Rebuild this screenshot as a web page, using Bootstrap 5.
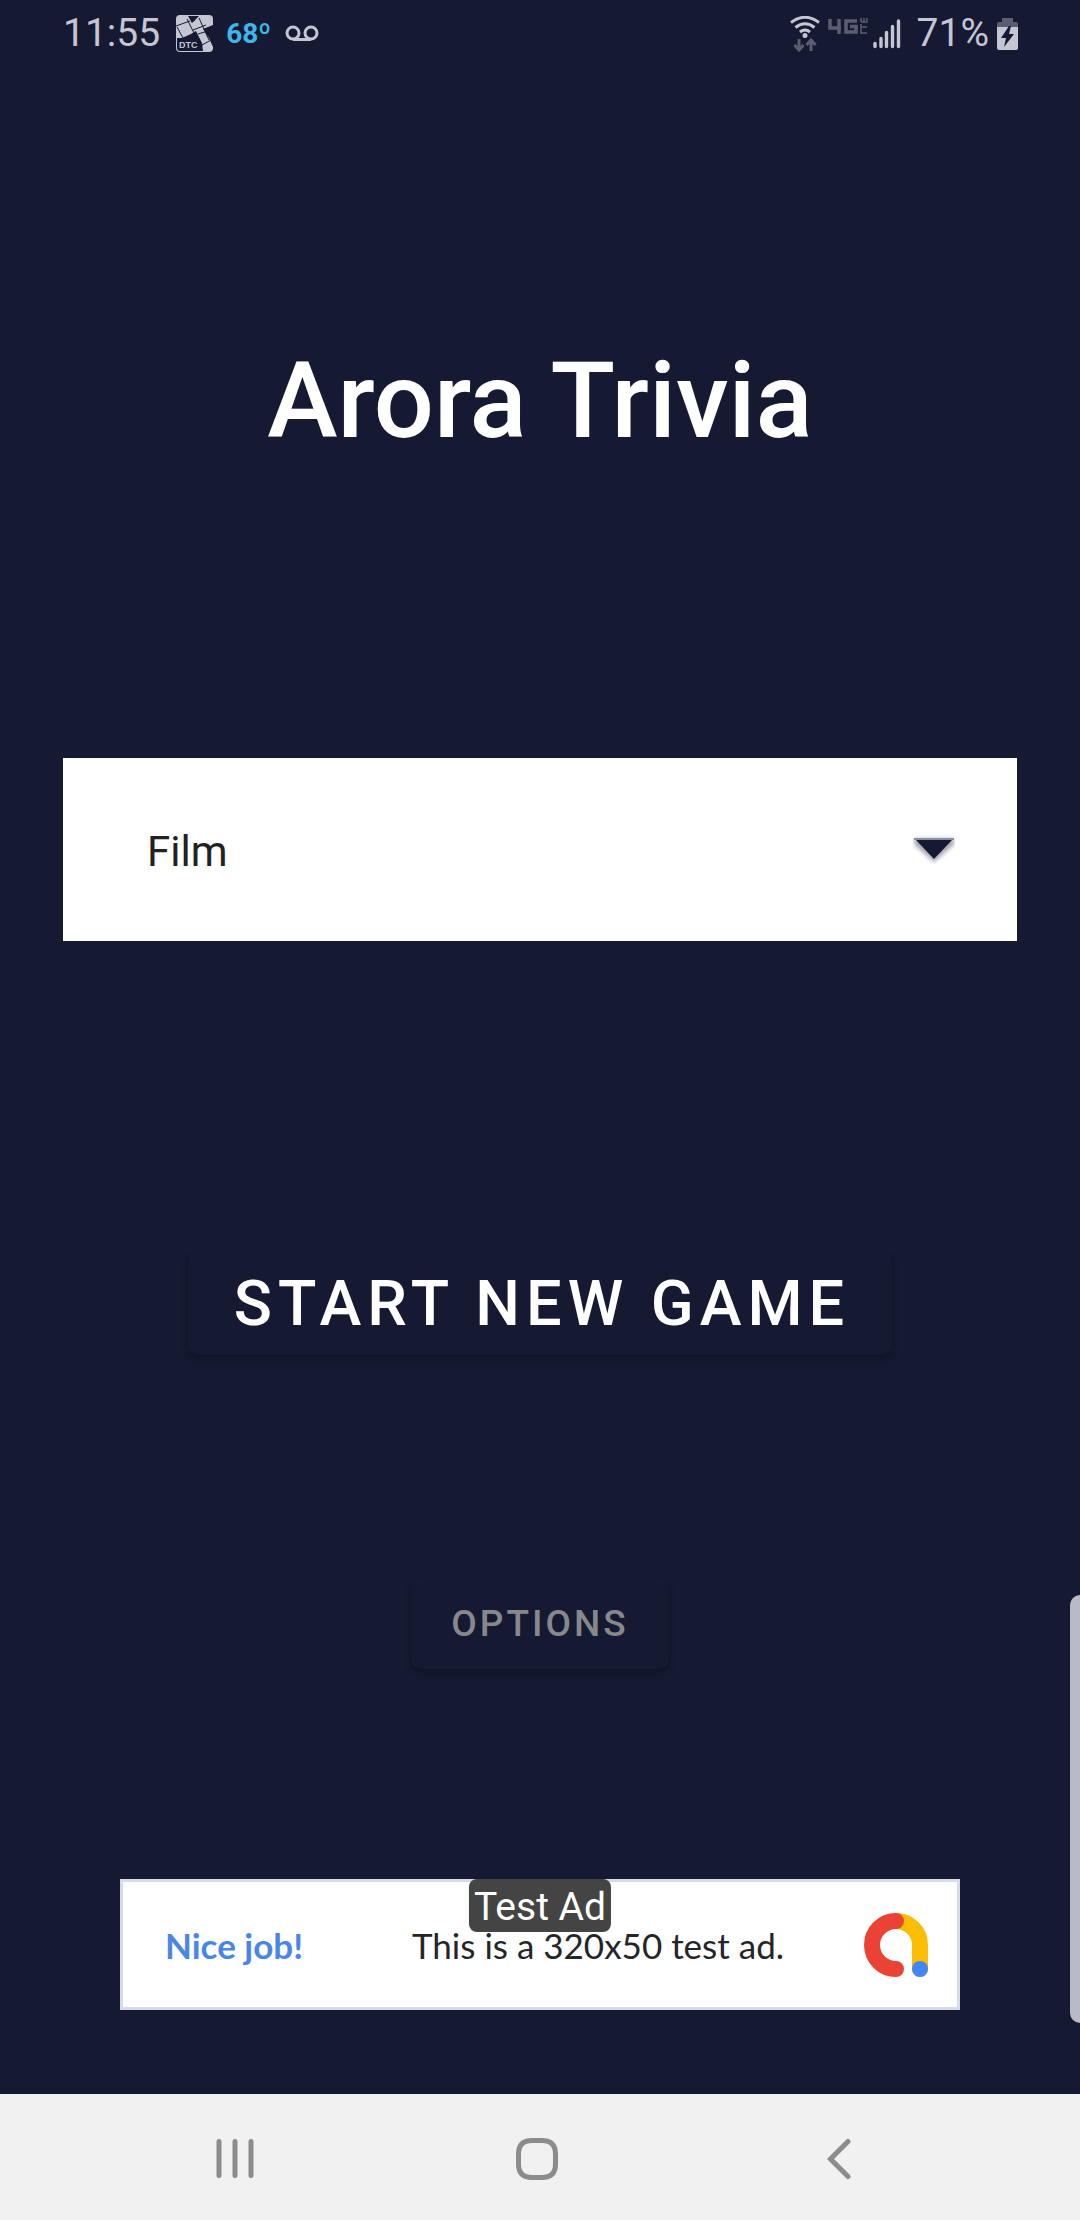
<!DOCTYPE html>
<html lang="en">
<head>
<meta charset="utf-8">
<meta name="viewport" content="width=device-width, initial-scale=1">
<title>Arora Trivia</title>
<link href="https://cdn.jsdelivr.net/npm/bootstrap@5.3.0/dist/css/bootstrap.min.css" rel="stylesheet">
<style>
  body { background: #151932; color: #fff; font-family: Roboto, "Liberation Sans", sans-serif; overflow-x: hidden; }
  svg { display: block; flex: none; }
  .status-bar { height: 64px; padding: 3px 62px 0 63px; color: #c4c6d2; font-size: 39px; line-height: 61px; }
  .status-temp { font-family: Roboto, sans-serif; font-weight: 700; font-size: 28px; color: #3fb5ea; margin-left: 13px; margin-right: 14px; }
  .game-title { font-size: 106px; line-height: 123px; font-weight: 500; margin: 276px 0 295px; }
  .category-wrap { padding: 0 63px; }
  .category-select { height: 183px; border: 0; border-radius: 0; padding: 4px 120px 0 84px; font-size: 42px; color: #222; background-color: #fff; background-image: none; }
  .category-arrow { right: 62px; top: 76px; pointer-events: none; }
  .flat-btn { background: #151932; border: 0; border-radius: 10px; font-weight: 500; box-shadow: 0 4px 6px rgba(10, 12, 26, .35); }
  .flat-btn:hover { background: #1b2040; }
  .btn-start, .btn-start:hover { color: #fff; }
  .btn-start { font-size: 63px; line-height: 103px; letter-spacing: 6px; margin-top: 311px; padding: 0 42px 0 46px; }
  .btn-options, .btn-options:hover { color: #86888c; }
  .btn-options { font-size: 37px; line-height: 91px; letter-spacing: 3px; margin-top: 223px; padding: 0 40px; }
  .ad-banner { width: 840px; max-width: 100%; height: 131px; margin: 210px 0 84px; padding: 1px 29px 0 42px; background: #fff; border: 3px solid #d6dce9; color: #242528; font-family: Lato, sans-serif; font-size: 35px; text-decoration: none; }
  .ad-head { color: #4a86e8; font-weight: 700; }
  .ad-body { gap: 80px; }
  .ad-tag { top: -3px; left: 50%; transform: translateX(-50%); background: #444; border-radius: 8px; color: #fff; font-family: Roboto, sans-serif; font-size: 39px; line-height: 49px; padding: 4px 5px 0; white-space: nowrap; }
  .edge-handle { right: 0; top: 1595px; width: 10px; height: 428px; border-radius: 14px 0 0 14px; background: #b8bac8; border: 0; padding: 0; }
  .system-nav { height: 126px; background: #f1f1f1; padding: 4px 90px 0 84px; }
  .system-nav button { background: none; border: 0; padding: 0; }
</style>
<script src="https://cdn.jsdelivr.net/npm/bootstrap@5.3.0/dist/js/bootstrap.bundle.min.js"></script>
</head>
<body class="position-relative d-flex flex-column min-vh-100">

<header class="status-bar d-flex justify-content-between">
  <div class="d-flex align-items-center">
    <span>11:55</span>
    <svg class="ms-3" width="37" height="37" viewBox="0 0 37 37" role="img" aria-label="DTC">
      <rect width="37" height="37" rx="4" fill="#c4c6d2"/>
      <path d="M12 1H23L16 8ZM1 23L6 23L15 19L20 16L26 28L27 36H4Q1 36 1 33ZM27 14L37 10V32L33 23Z" fill="#151932"/>
      <path d="M0 11L14 6M1 12L7 23M11 4L18 18M15 7L19 5M17 15L30 10M22 19L32 16M26 30L37 24M23 3L33 25" stroke="#151932" stroke-width="1" fill="none"/>
      <text x="3" y="33" font-family="Liberation Sans" font-size="9" font-weight="bold" fill="#c4c6d2">DTC</text>
    </svg>
    <span class="status-temp">68º</span>
    <svg width="34" height="17" viewBox="0 0 34 17" fill="none" stroke="#c4c6d2" stroke-width="3">
      <circle cx="8" cy="8" r="6"/><circle cx="26" cy="8" r="6"/><path d="M8 14.5H26"/>
    </svg>
  </div>
  <div class="d-flex align-items-center">
    <svg width="30" height="36" viewBox="0 0 30 36" fill="none">
      <g stroke="#c4c6d2" stroke-width="3"><path d="M1 6.500Q15-4 29 6.500M5.500 11.500Q15 4 24.500 11.500M10 16Q15 12 20 16"/></g>
      <circle cx="15" cy="19.500" r="2.500" fill="#c4c6d2"/>
      <path d="M9 23V34M4.500 29L9 34L13.500 29M21 35V24M16.500 29L21 24L25.500 29" stroke="#5b5e72" stroke-width="3"/>
    </svg>
    <svg class="ms-2" width="40" height="34" viewBox="0 0 40 34" fill="none" stroke="#5b5e72">
      <path d="M2 2V11H13M11 2V17M29 4H18V15H28V9.500H22" stroke-width="3.500"/>
      <path d="M33 16H39M33 13V17M33 10H39M33 7V13M33 5H39V1M36 5V1M33 5V1" stroke-width="1.500"/>
    </svg>
    <svg class="ms-1" width="29" height="32" viewBox="0 0 29 32" stroke="#c4c6d2" stroke-width="3.400" stroke-linecap="round">
      <path d="M3 25.500V28.500M9 20.500V28.500M14.500 14.500V28.500M20.500 8.500V28.500M26.500 3V28.500"/>
    </svg>
    <span class="ms-3">71%</span>
    <svg class="ms-2" width="21" height="34" viewBox="0 0 21 34">
      <path d="M5 1H16V5H19Q21 5 21 7V12H0V7Q0 5 2 5H5Z" fill="#5b5e72"/>
      <path d="M0 10H21V31Q21 33 19 33H2Q0 33 0 31Z" fill="#c4c6d2"/>
      <path d="M12 9L4 21H9L7 30L17 17H12L14 9Z" fill="#151932"/>
    </svg>
  </div>
</header>

<main class="d-flex flex-column align-items-center flex-grow-1">
  <h1 class="game-title text-center">Arora Trivia</h1>

  <div class="category-wrap w-100">
    <div class="position-relative">
      <select class="form-select category-select" aria-label="Category">
        <option selected>Film</option>
        <option>Music</option>
        <option>Television</option>
      </select>
      <svg class="category-arrow position-absolute" width="42" height="32" viewBox="0 0 42 32">
        <defs><filter id="soft" x="-20%" y="-20%" width="140%" height="150%"><feGaussianBlur stdDeviation="2"/></filter></defs>
        <path d="M1 5H41V10L21 28L1 10Z" fill="#151932" opacity=".4" filter="url(#soft)"/>
        <path d="M3 6H39L21 25Z" fill="#151932"/>
        <path d="M1 5H41" stroke="#8b8da0" stroke-width="2"/>
      </svg>
    </div>
  </div>

  <button type="button" class="btn flat-btn btn-start">START NEW GAME</button>
  <button type="button" class="btn flat-btn btn-options">OPTIONS</button>

  <a href="#" class="ad-banner position-relative d-flex align-items-center justify-content-between">
    <span class="ad-head">Nice job!</span>
    <span class="ad-body d-flex align-items-center">
      <span>This is a 320x50 test ad.</span>
      <svg width="64" height="64" viewBox="0 0 64 64" fill="none" stroke-width="16" stroke-linecap="round">
        <path d="M32 8A24 24 0 0 1 56 32V56" stroke="#fbbc04"/>
        <path d="M32 8A24 24 0 0 0 32 56" stroke="#ea4335"/>
        <circle cx="56" cy="56" r="8" fill="#4285f4"/>
      </svg>
    </span>
    <span class="ad-tag position-absolute">Test Ad</span>
  </a>
</main>

<button type="button" class="edge-handle position-absolute" aria-label="Edge panel"></button>

<nav class="system-nav d-flex" aria-label="System">
  <button type="button" class="flex-fill d-flex justify-content-center align-items-center" aria-label="Recents">
    <svg width="42" height="42" viewBox="0 0 42 42" stroke="#8c8c8c" stroke-width="5" stroke-linecap="round"><path d="M5 3.500V37.500M21 3.500V37.500M37 3.500V37.500"/></svg>
  </button>
  <button type="button" class="flex-fill d-flex justify-content-center align-items-center" aria-label="Home">
    <svg width="42" height="42" viewBox="0 0 42 42" fill="none" stroke="#8c8c8c" stroke-width="5"><path d="M16 2.500H26Q39.500 2.500 39.500 16V26Q39.500 39.500 26 39.500H16Q2.500 39.500 2.500 26V16Q2.500 2.500 16 2.500Z"/></svg>
  </button>
  <button type="button" class="flex-fill d-flex justify-content-center align-items-center" aria-label="Back">
    <svg width="42" height="42" viewBox="0 0 42 42" fill="none" stroke="#8c8c8c" stroke-width="5" stroke-linecap="round"><path d="M30 3.500L12.500 21L30 38.500"/></svg>
  </button>
</nav>
</body>
</html>
